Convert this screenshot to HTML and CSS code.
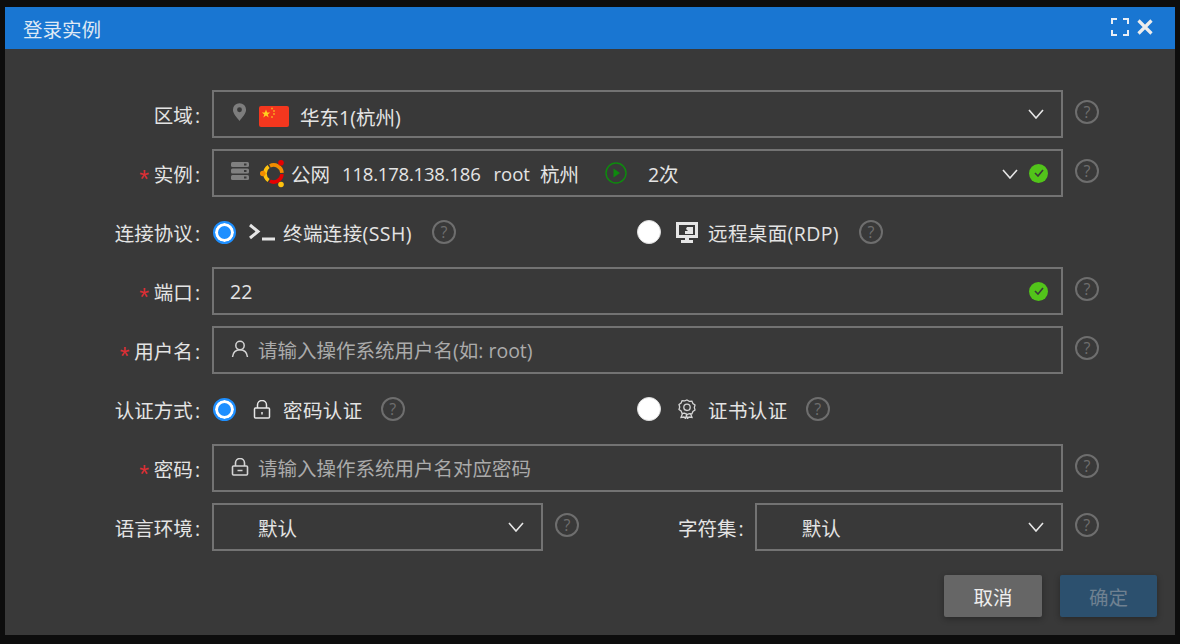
FILE: index.html
```html
<!DOCTYPE html>
<html lang="zh-CN">
<head>
    <meta charset="UTF-8">
    <meta name="viewport" content="width=device-width, initial-scale=1.0">
    <title>登录实例</title>
    <link rel="stylesheet" href="styles.css">
</head>
<body>
    <div class="modal">
        <div class="modal-header">
            <span class="modal-title">登录实例</span>
            <span class="modal-tools">
                <svg class="icon-expand" viewBox="0 0 18 18" width="18" height="18" fill="none" stroke="#e8eef6" stroke-width="2"><path d="M1 6V1h5M12 1h5v5M17 12v5h-5M6 17H1v-5"/></svg>
                <svg class="icon-close" viewBox="0 0 16 16" width="16" height="16" fill="none" stroke="#ececec" stroke-width="3.200"><path d="M1.500 1.500l13 13M14.500 1.500l-13 13"/></svg>
            </span>
        </div>
        <form class="modal-body">
            <div class="row">
                <label class="label">区域<span class="colon">:</span></label>
                <div class="field field-select">
                    <svg class="icon-pin" viewBox="0 0 16 20" width="15" height="19"><path fill="#7d7d7d" fill-rule="evenodd" d="M8 0a7 7 0 0 1 7 7c0 4-4 8-7 12C5 15 1 11 1 7a7 7 0 0 1 7-7zm0 4.500a2.600 2.600 0 1 0 0 5.200 2.600 2.600 0 0 0 0-5.200z"/></svg>
                    <svg class="icon-flag" viewBox="0 0 30 21" width="30" height="21"><rect width="30" height="21" rx="2" fill="#f4371e"/><path fill="#ffd21f" d="M7 3.500l1.100 3h3.100l-2.500 1.900 1 3.100L7 9.600l-2.700 1.900 1-3.100-2.500-1.900h3.100z"/><g fill="#f7a21f"><circle cx="13" cy="2.500" r="1"/><circle cx="15" cy="5" r="1"/><circle cx="15" cy="8" r="1"/><circle cx="13" cy="11" r="1"/></g></svg>
                    <span class="value value-region">华东1(杭州)</span>
                    <svg class="chevron" viewBox="0 0 16 10" width="16" height="10" fill="none" stroke="#e6e6e6" stroke-width="1.600"><path d="M1 1l7 8 7-8"/></svg>
                </div>
                <span class="help">?</span>
            </div>
            <div class="row">
                <label class="label"><i class="req">*</i>实例<span class="colon">:</span></label>
                <div class="field field-select">
                    <svg class="icon-server" viewBox="0 0 18 18" width="18" height="18"><g fill="#808080"><rect y="0" width="18" height="5" rx="1.500"/><rect y="6.500" width="18" height="5" rx="1.500"/><rect y="13" width="18" height="5" rx="1.500"/></g><g fill="#393939"><rect x="13" y="1.500" width="2.500" height="2"/><rect x="13" y="8" width="2.500" height="2"/><rect x="13" y="14.500" width="2.500" height="2"/></g></svg>
                    <svg class="icon-ubuntu" viewBox="0 0 28 28" width="28" height="28"><g fill="none" stroke-width="3.600"><path stroke="#ffc20e" d="M8.600 20.500A8.500 8.500 0 0 1 8.600 6.500"/><path stroke="#f28c00" d="M9.900 5.800A8.500 8.500 0 0 1 22 12.800"/><path stroke="#e60000" d="M22 14.200A8.500 8.500 0 0 1 9.900 21.200"/></g><circle cx="2.800" cy="13.500" r="2.800" fill="#f28c00"/><circle cx="21" cy="2.800" r="2.800" fill="#e60000"/><circle cx="21" cy="24.500" r="2.800" fill="#ffc20e"/></svg>
                    <span class="value value-net">公网</span>
                    <span class="value value-ip">118.178.138.186</span>
                    <span class="value value-user">root</span>
                    <span class="value value-city">杭州</span>
                    <svg class="icon-play" viewBox="0 0 22 22" width="22" height="22"><circle cx="11" cy="11" r="10" fill="none" stroke="#0e8a0e" stroke-width="1.500"/><path fill="#0e8a0e" d="M8.500 6.500l6.500 4.500-6.500 4.500z"/></svg>
                    <span class="value value-count">2次</span>
                    <svg class="chevron chevron-tight" viewBox="0 0 16 10" width="16" height="10" fill="none" stroke="#e6e6e6" stroke-width="1.600"><path d="M1 1l7 8 7-8"/></svg>
                    <span class="check"><svg viewBox="0 0 10 8" width="10" height="8" fill="none" stroke="#393939" stroke-width="1.600"><path d="M1 4l3 3 5-6"/></svg></span>
                </div>
                <span class="help">?</span>
            </div>
            <div class="row">
                <label class="label">连接协议<span class="colon">:</span></label>
                <div class="radio-cols">
                    <div class="radio-item">
                        <span class="radio radio-on"></span>
                        <svg class="icon-term" viewBox="0 0 27 18" width="27" height="18" fill="none" stroke="#e6e6e6" stroke-width="3"><path d="M2 2l8 6.500L2 15"/><path d="M14 16h13"/></svg>
                        <span class="radio-text text-ssh">终端连接(SSH)</span>
                        <span class="help help-inline">?</span>
                    </div>
                    <div class="radio-item">
                        <span class="radio"></span>
                        <svg class="icon-rdp" viewBox="0 0 22 21" width="22" height="21"><path fill="#e6e6e6" fill-rule="evenodd" d="M0 0h22v16H13v2h4v3H5v-3h4v-2H0zm3 3v10h16V3z"/><path fill="#e6e6e6" d="M11 5h6v7H9V9h3l-2-2z"/></svg>
                        <span class="radio-text text-rdp">远程桌面(RDP)</span>
                        <span class="help help-inline">?</span>
                    </div>
                </div>
            </div>
            <div class="row">
                <label class="label"><i class="req">*</i>端口<span class="colon">:</span></label>
                <div class="field">
                    <input class="input input-port" type="text" value="22">
                    <span class="check"><svg viewBox="0 0 10 8" width="10" height="8" fill="none" stroke="#393939" stroke-width="1.600"><path d="M1 4l3 3 5-6"/></svg></span>
                </div>
                <span class="help">?</span>
            </div>
            <div class="row">
                <label class="label"><i class="req">*</i>用户名<span class="colon">:</span></label>
                <div class="field">
                    <svg class="icon-prefix" viewBox="0 0 18 18" width="18" height="18" fill="none" stroke="#d4d4d4" stroke-width="1.500"><circle cx="9" cy="5.500" r="4.200"/><path d="M1.500 17c.5-4.500 3.500-7.300 7.500-7.300s7 2.800 7.500 7.300"/></svg>
                    <input class="input" type="text" placeholder="请输入操作系统用户名(如: root)">
                </div>
                <span class="help">?</span>
            </div>
            <div class="row">
                <label class="label">认证方式<span class="colon">:</span></label>
                <div class="radio-cols">
                    <div class="radio-item">
                        <span class="radio radio-on"></span>
                        <svg class="icon-lock" viewBox="0 0 18 19" width="18" height="19" fill="none" stroke="#e6e6e6" stroke-width="1.500"><rect x="1.500" y="8" width="15" height="10" rx="1"/><path d="M4.500 8V5a4.500 4.500 0 0 1 9 0v3M9 12v2.500"/></svg>
                        <span class="radio-text text-pwd">密码认证</span>
                        <span class="help help-inline">?</span>
                    </div>
                    <div class="radio-item">
                        <span class="radio"></span>
                        <svg class="icon-cert" viewBox="0 0 18 20" width="18" height="20" fill="none" stroke="#d4d4d4" stroke-width="1.300"><path d="M9 1l2.300 1.300 2.600-.2 1 2.400 2.100 1.500-.7 2.500.7 2.500-2.100 1.500-1 2.400-2.600-.2L9 15.500l-2.300-1.300-2.600.2-1-2.400L1 10.500 1.700 8 1 5.500l2.100-1.500 1-2.400 2.600.2z"/><circle cx="9" cy="8.300" r="3.200"/><path d="M4.500 14.500L3 18.500l3-.5 1.500 1.500 1-3.500 1 3.500L11 18l3 .5-1.500-4"/></svg>
                        <span class="radio-text text-cert">证书认证</span>
                        <span class="help help-inline">?</span>
                    </div>
                </div>
            </div>
            <div class="row">
                <label class="label"><i class="req">*</i>密码<span class="colon">:</span></label>
                <div class="field">
                    <svg class="icon-prefix" viewBox="0 0 18 18" width="18" height="18" fill="none" stroke="#d4d4d4" stroke-width="1.600"><rect x="1.500" y="8" width="15" height="9" rx="1"/><path d="M4.500 8V5a4.500 4.500 0 0 1 9 0v3M6.500 12.500h5"/></svg>
                    <input class="input" type="text" placeholder="请输入操作系统用户名对应密码">
                </div>
                <span class="help">?</span>
            </div>
            <div class="row">
                <label class="label">语言环境<span class="colon">:</span></label>
                <div class="field field-select field-locale">
                    <span class="value value-default">默认</span>
                    <svg class="chevron" viewBox="0 0 16 10" width="16" height="10" fill="none" stroke="#e6e6e6" stroke-width="1.600"><path d="M1 1l7 8 7-8"/></svg>
                </div>
                <span class="help">?</span>
                <label class="label label-charset">字符集<span class="colon">:</span></label>
                <div class="field field-select field-charset">
                    <span class="value value-default">默认</span>
                    <svg class="chevron" viewBox="0 0 16 10" width="16" height="10" fill="none" stroke="#e6e6e6" stroke-width="1.600"><path d="M1 1l7 8 7-8"/></svg>
                </div>
                <span class="help">?</span>
            </div>
            <div class="actions">
                <button class="btn btn-cancel" type="button">取消</button>
                <button class="btn btn-ok" type="button">确定</button>
            </div>
        </form>
    </div>
</body>
</html>
```

FILE: styles.css
```css
* {
    box-sizing: border-box;
}
body {
    margin: 0;
    height: 644px;
    padding: 7px 5px 9px;
    overflow: hidden;
    background-color: #0d0d0d;
    font-family: "Open Sans", "Noto Sans CJK SC", sans-serif;
    font-size: 19.5px;
    color: #e4e4e4;
}
.modal {
    height: 628px;
    background-color: #393939;
}
.modal-header {
    display: flex;
    align-items: center;
    justify-content: space-between;
    height: 42px;
    padding: 0 22px 0 18px;
    background-color: #1976d2;
}
.modal-title {
    color: #dfe9f5;
}
.modal-tools {
    display: flex;
    align-items: center;
    gap: 8px;
    margin-top: -3px;
}
.modal-body {
    padding-top: 41px;
}
.row {
    display: flex;
    align-items: center;
    height: 48px;
    margin-bottom: 11px;
}
.label {
    flex: none;
    width: 196px;
    margin-right: 11px;
    text-align: right;
}
.colon {
    margin: 0 1px 0 2px;
}
.req {
    display: inline-block;
    margin-right: 5px;
    color: #dc2f35;
    font-family: "Liberation Sans", sans-serif;
    font-size: 25px;
    font-style: normal;
    line-height: 0;
    vertical-align: -6px;
}
.field {
    display: flex;
    align-items: center;
    flex: none;
    width: 851px;
    height: 48px;
    padding: 0 13px 0 15px;
    border: 2px solid #737373;
}
.field-locale {
    width: 331px;
}
.field-charset {
    width: 308px;
}
.label-charset {
    width: auto;
    margin-left: 99px;
    margin-right: 10px;
}
.help {
    flex: none;
    width: 24px;
    height: 24px;
    margin-left: 12px;
    margin-top: -4px;
    border: 2px solid #6e6e6e;
    border-radius: 50%;
    color: #6e6e6e;
    font-size: 16px;
    line-height: 20px;
    text-align: center;
}
.help-inline {
    margin-top: 0;
    margin-left: 20px;
}
.value {
    margin-top: 1px;
    white-space: nowrap;
}
.chevron {
    margin-left: auto;
    margin-right: 4px;
}
.chevron-tight {
    margin-right: 0;
    margin-top: 1px;
}
.icon-pin {
    margin: -4px 0 0 3px;
}
.icon-flag {
    margin: 5px 0 0 12px;
}
.value-region {
    margin: 4px 0 0 11px;
}
.icon-server {
    margin: -4px 0 0 2px;
}
.icon-ubuntu {
    margin: 1px 0 0 11px;
}
.value-net {
    margin-left: 3px;
}
.value-ip {
    margin-left: 12px;
    font-size: 18.5px;
    letter-spacing: -0.2px;
}
.value-user {
    margin-left: 13px;
    font-size: 18.5px;
}
.value-city {
    margin-left: 10px;
}
.icon-play {
    margin-left: 26px;
}
.value-count {
    margin-left: 21px;
}
.check {
    display: flex;
    align-items: center;
    justify-content: center;
    flex: none;
    width: 19px;
    height: 19px;
    margin-left: 11px;
    border-radius: 50%;
    background-color: #52c41a;
}
.field .input + .check {
    margin-left: 0;
}
.input {
    flex: 1;
    min-width: 0;
    margin-top: 1px;
    padding: 0;
    border: none;
    outline: none;
    background: transparent;
    color: #e4e4e4;
    font: inherit;
}
.input-port {
    padding-left: 1px;
}
.input::placeholder {
    color: #ababab;
    opacity: 1;
}
.icon-prefix {
    margin: -2px 9px 0 2px;
}
.radio-cols {
    display: grid;
    grid-template-columns: 425px 425px;
}
.radio-item {
    display: flex;
    align-items: center;
}
.radio {
    flex: none;
    width: 24px;
    height: 24px;
    border-radius: 50%;
    background-color: #fff;
    border: 1px solid #ddd;
}
.radio-on {
    width: 23px;
    height: 23px;
    margin-left: 1px;
    border: 2px solid #1e8fff;
    background-color: #1e8fff;
    box-shadow: inset 0 0 0 3px #fff;
}
.radio-text {
    letter-spacing: 0.4px;
    white-space: nowrap;
}
.icon-term {
    margin-left: 12px;
}
.text-ssh {
    margin-left: 8px;
}
.icon-rdp {
    margin-left: 15px;
}
.text-rdp {
    margin-left: 10px;
}
.icon-lock {
    margin-left: 17px;
}
.text-pwd {
    margin-left: 12px;
}
.icon-cert {
    margin-left: 17px;
}
.text-cert {
    margin-left: 12px;
}
.text-pwd + .help-inline,
.text-cert + .help-inline {
    margin-left: 18px;
}
.value-default {
    margin-left: 29px;
}
.field-charset .value-default {
    margin-left: 30px;
}
.actions {
    display: flex;
    justify-content: flex-end;
    gap: 18px;
    margin-top: 24px;
    padding-right: 18px;
}
.btn {
    width: 98px;
    height: 42px;
    border: none;
    border-radius: 2px;
    font: inherit;
    box-shadow: 0 2px 6px rgba(0, 0, 0, 0.3);
}
.btn-cancel {
    background-color: #666;
    color: #eee;
}
.btn-ok {
    width: 97px;
    background-color: #2c506e;
    color: #6f8191;
}
```
